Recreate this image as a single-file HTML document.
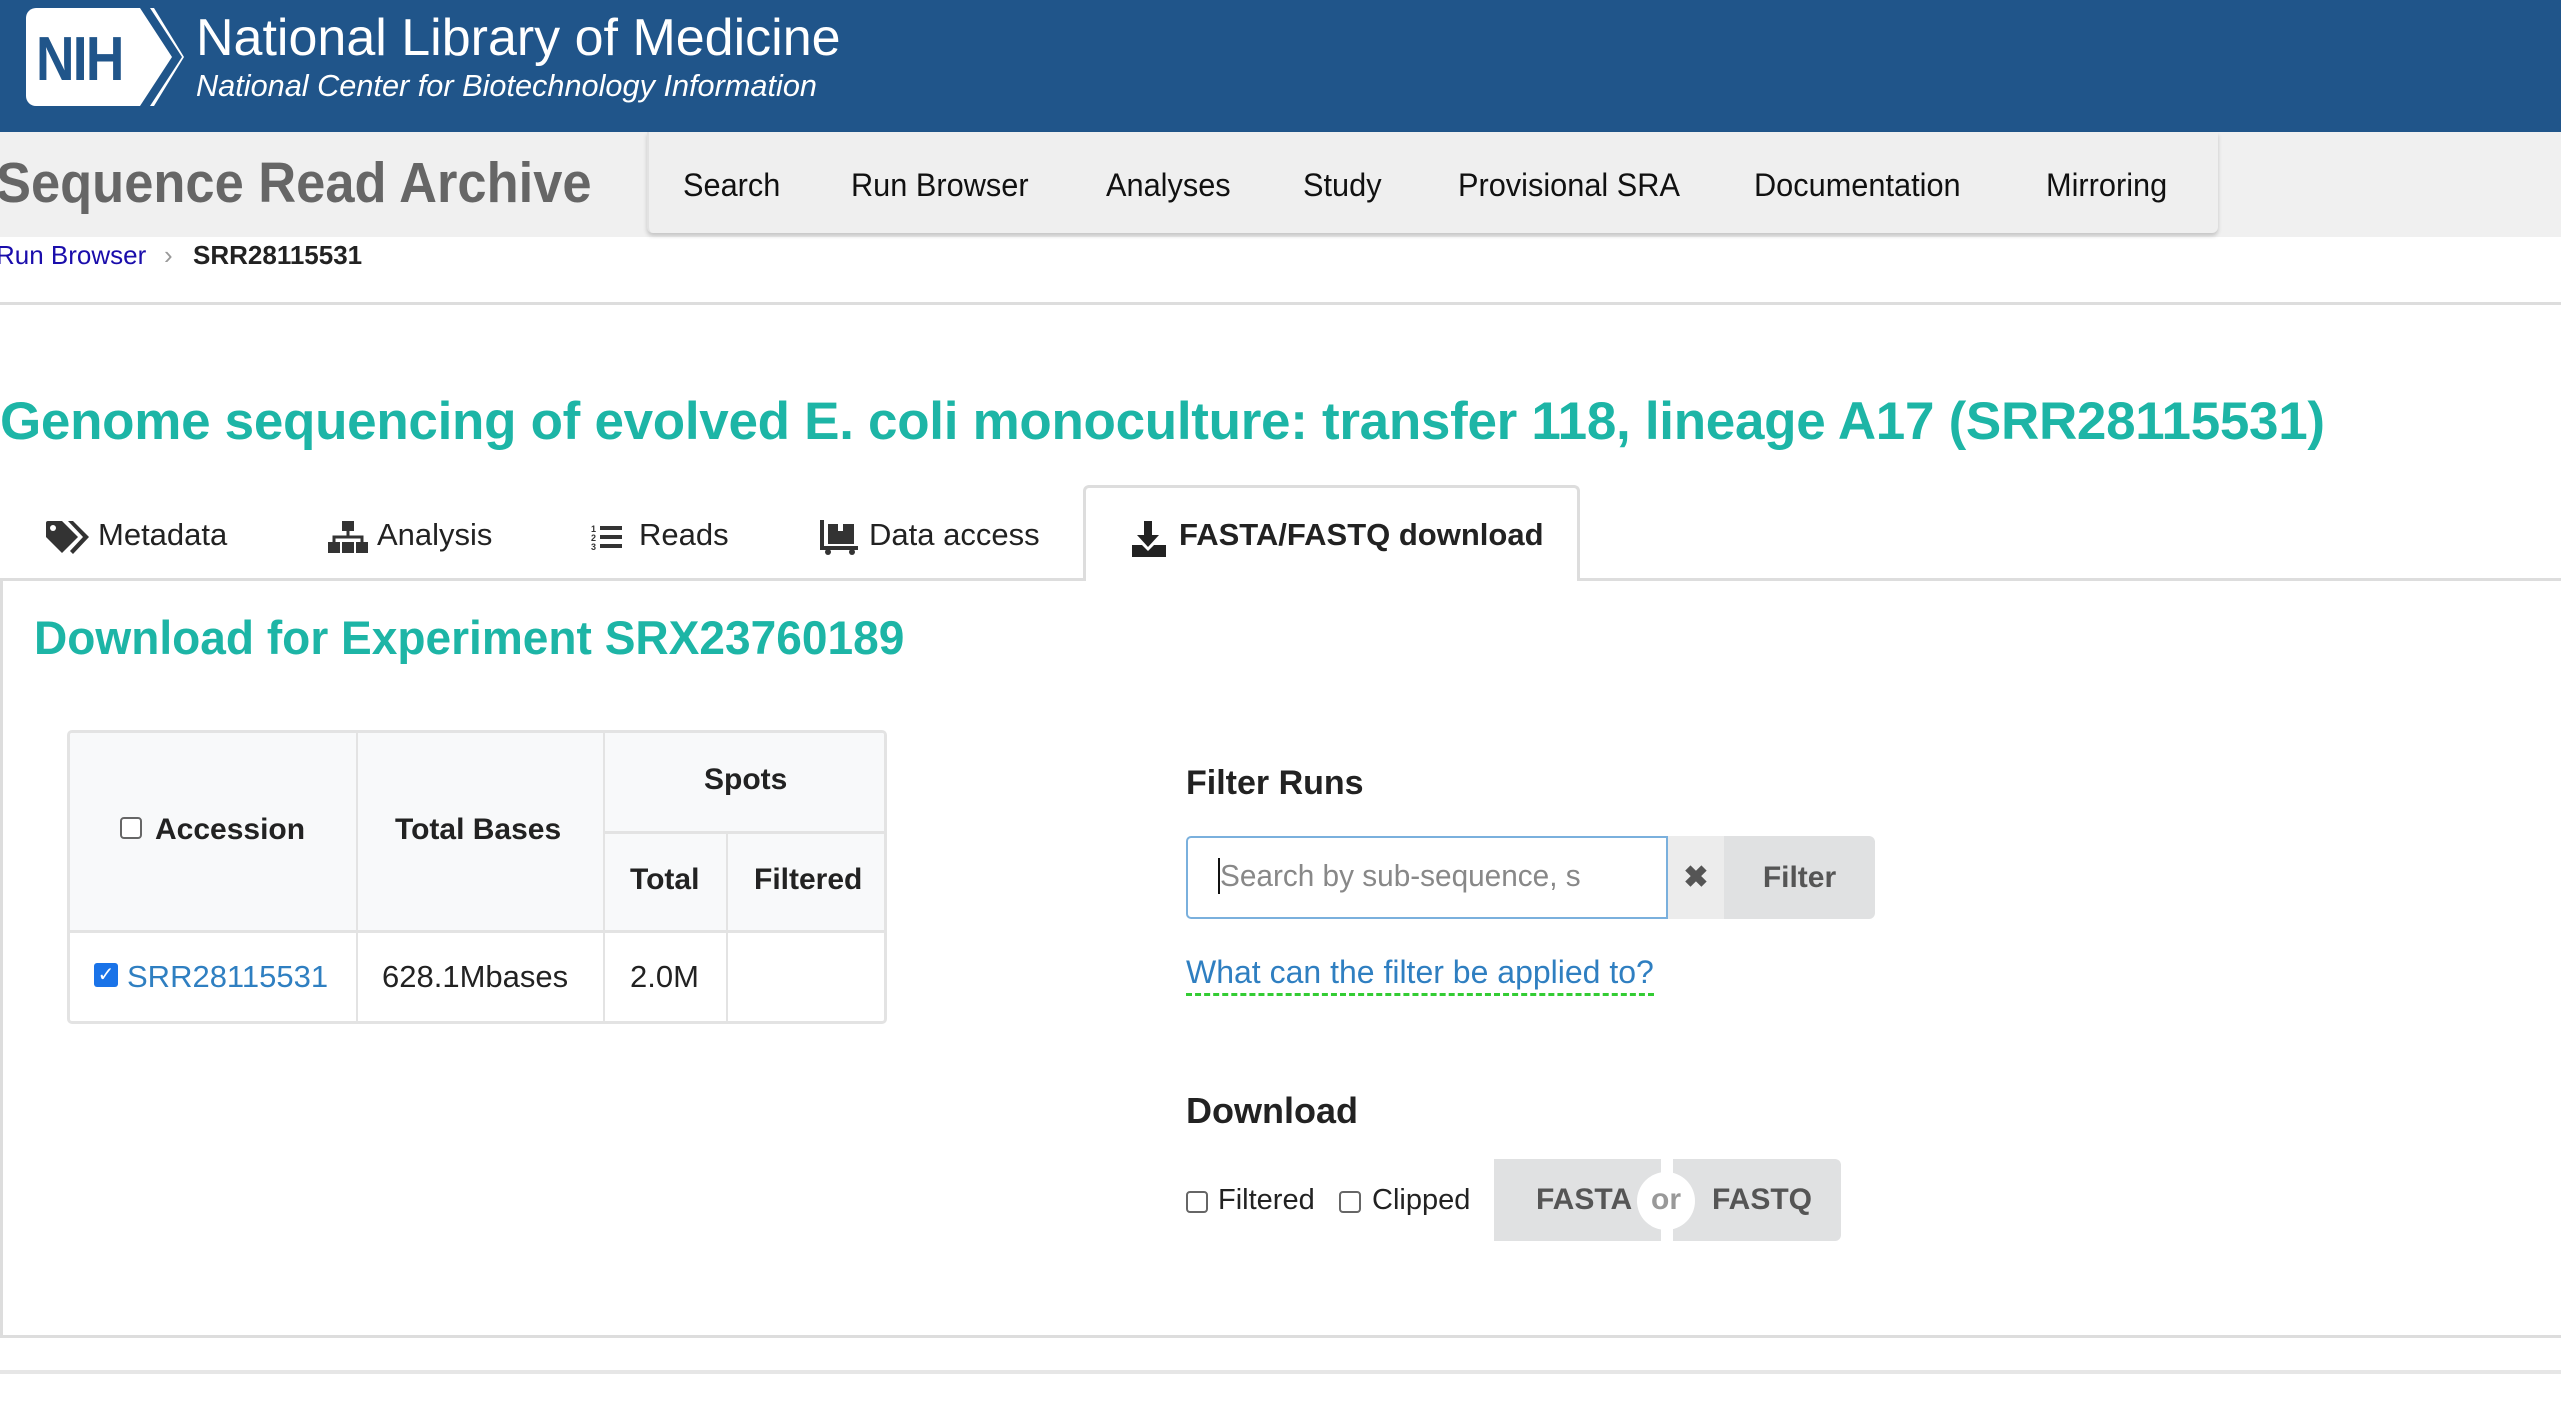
<!DOCTYPE html>
<html><head><meta charset="utf-8"><style>
*{margin:0;padding:0;box-sizing:border-box}
body{width:2561px;height:1404px;position:relative;background:#fff;font-family:"Liberation Sans",sans-serif;overflow:hidden;color:#222}
.a{position:absolute;white-space:nowrap}
.hdr{left:0;top:0;width:2561px;height:132px;background:#20558a}
.bar{left:0;top:132px;width:2561px;height:105px;background:#f0f0f0}
.nav{left:647px;top:132px;width:1571px;height:101px;background:#efefef;border-radius:0 0 6px 6px;box-shadow:0 3px 4px rgba(0,0,0,.18);border-left:2px solid #e2e2e2}
.ni{top:167px;font-size:32px;color:#111;transform:scaleX(.96);transform-origin:left}
.tab{top:517px;font-size:31px;color:#222}
.th{font-weight:bold;font-size:30px;color:#222}
.cb{width:22px;height:22px;border:2px solid #666;border-radius:4px;background:#fff}
</style></head><body>
<div class="a hdr"></div>
<div class="a" style="left:26px;top:8px;width:128px;height:98px;background:#fff;border-radius:10px 0 0 10px"></div>
<svg class="a" style="left:100px;top:8px" width="84" height="98"><polygon points="0,0 40,0 78,49 40,98 0,98" fill="#fff"/><polygon points="44,0 54,0 84,49 54,98 44,98 72,49" fill="#fff"/></svg>
<svg class="a" style="left:100px;top:8px" width="90" height="98"><polygon points="40,0 50,0 82,49 50,98 40,98 72,49" fill="#20558a"/></svg>
<div class="a" style="left:36px;top:24px;font-size:62px;font-weight:bold;color:#20558a;letter-spacing:-2px;transform:scaleX(.86);transform-origin:left">NIH</div>
<div class="a" style="left:196px;top:8px;font-size:52px;color:#fff">National Library of Medicine</div>
<div class="a" style="left:196px;top:68px;font-size:31px;color:#fff;font-style:italic;transform:scaleX(.99);transform-origin:left">National Center for Biotechnology Information</div>
<div class="a bar"></div>
<div class="a" style="left:-4px;top:150px;font-size:57px;font-weight:bold;color:#666;transform:scaleX(.92);transform-origin:left">Sequence Read Archive</div>
<div class="a nav"></div>
<div class="a ni" style="left:683px">Search</div>
<div class="a ni" style="left:851px">Run Browser</div>
<div class="a ni" style="left:1106px">Analyses</div>
<div class="a ni" style="left:1303px">Study</div>
<div class="a ni" style="left:1458px">Provisional SRA</div>
<div class="a ni" style="left:1754px">Documentation</div>
<div class="a ni" style="left:2046px">Mirroring</div>
<div class="a" style="left:-4px;top:240px;font-size:26px;color:#1a0dab">Run Browser</div>
<div class="a" style="left:164px;top:240px;font-size:26px;color:#999">›</div>
<div class="a" style="left:193px;top:240px;font-size:26px;font-weight:bold;color:#222">SRR28115531</div>
<div class="a" style="left:0;top:302px;width:2561px;height:3px;background:#ddd"></div>
<div class="a" style="left:0;top:391px;font-size:53px;font-weight:bold;color:#1db5a6;letter-spacing:-0.3px">Genome sequencing of evolved E. coli monoculture: transfer 118, lineage A17 (SRR28115531)</div>
<!-- tabs -->
<div class="a" style="left:0;top:578px;width:2561px;height:3px;background:#ddd"></div>
<div class="a" style="left:1083px;top:485px;width:497px;height:96px;background:#fff;border:3px solid #ddd;border-bottom:none;border-radius:6px 6px 0 0"></div>
<svg class="a" style="left:46px;top:521px" width="44" height="34" viewBox="0 0 44 34"><path d="M0 2 Q0 0 2 0 H16 L32 16 L16 32 L0 16Z" fill="#333"/><circle cx="7" cy="7" r="3" fill="#fff"/><path d="M22 0 H27 L43 16 L27 33 L24 30 L37 16Z" fill="#333"/></svg>
<div class="a tab" style="left:98px">Metadata</div>
<svg class="a" style="left:328px;top:521px" width="40" height="32" viewBox="0 0 40 32"><rect x="14" y="0" width="12" height="10" fill="#333"/><path d="M20 10v6M6 22v-6h28v6" stroke="#333" stroke-width="3" fill="none"/><rect x="0" y="21" width="12" height="11" fill="#333"/><rect x="14" y="21" width="12" height="11" fill="#333"/><rect x="28" y="21" width="12" height="11" fill="#333"/></svg>
<div class="a tab" style="left:377px">Analysis</div>
<svg class="a" style="left:591px;top:523px" width="34" height="28" viewBox="0 0 34 28"><text x="0" y="9" font-size="9" font-weight="bold" fill="#333" font-family="Liberation Sans">1</text><text x="0" y="18" font-size="9" font-weight="bold" fill="#333" font-family="Liberation Sans">2</text><text x="0" y="27" font-size="9" font-weight="bold" fill="#333" font-family="Liberation Sans">3</text><rect x="9" y="3" width="22" height="4" fill="#333"/><rect x="9" y="12" width="22" height="4" fill="#333"/><rect x="9" y="21" width="22" height="4" fill="#333"/></svg>
<div class="a tab" style="left:639px">Reads</div>
<svg class="a" style="left:820px;top:520px" width="40" height="36" viewBox="0 0 40 36"><path d="M2 0v28h36" stroke="#333" stroke-width="4" fill="none"/><rect x="8" y="4" width="26" height="20" fill="#333"/><rect x="18" y="4" width="5" height="7" fill="#fff"/><circle cx="8" cy="32" r="3" fill="#333"/><circle cx="32" cy="32" r="3" fill="#333"/></svg>
<div class="a tab" style="left:869px">Data access</div>
<svg class="a" style="left:1132px;top:521px" width="34" height="36" viewBox="0 0 34 36"><path d="M12 0h8v14h7L16 26 5 14h7Z" fill="#222"/><path d="M0 24h10l6 6 6-6h12v12H0Z" fill="#222"/></svg>
<div class="a tab" style="left:1179px;font-weight:bold">FASTA/FASTQ download</div>
<!-- panel -->
<div class="a" style="left:0;top:580px;width:2561px;height:758px;border-left:3px solid #ddd;border-bottom:3px solid #ddd"></div>
<div class="a" style="left:0;top:1370px;width:2561px;height:4px;background:#e6e6e6"></div>
<div class="a" style="left:34px;top:610px;font-size:47px;font-weight:bold;color:#1db5a6;transform:scaleX(.98);transform-origin:left">Download for Experiment SRX23760189</div>
<!-- table -->
<div class="a" style="left:67px;top:730px;width:820px;height:294px;border:3px solid #e3e3e3;border-radius:5px;overflow:hidden">
 <div class="a" style="left:0;top:0;width:820px;height:200px;background:#f8f9fa;border-bottom:3px solid #e3e3e3"></div>
 <div class="a" style="left:286px;top:0;width:2px;height:294px;background:#e3e3e3"></div>
 <div class="a" style="left:533px;top:0;width:2px;height:294px;background:#e3e3e3"></div>
 <div class="a" style="left:533px;top:98px;width:290px;height:3px;background:#e3e3e3"></div>
 <div class="a" style="left:656px;top:100px;width:2px;height:194px;background:#e3e3e3"></div>
 <div class="a cb" style="left:50px;top:84px"></div>
 <div class="a th" style="left:85px;top:80px">Accession</div>
 <div class="a th" style="left:325px;top:80px">Total Bases</div>
 <div class="a th" style="left:634px;top:30px">Spots</div>
 <div class="a th" style="left:560px;top:130px">Total</div>
 <div class="a th" style="left:684px;top:130px">Filtered</div>
 <div class="a" style="left:24px;top:230px;width:24px;height:24px;background:#1a73e8;border-radius:3px;color:#fff;font-size:20px;text-align:center;line-height:24px">✓</div>
 <div class="a" style="left:57px;top:226px;font-size:31px;color:#2f7fc1">SRR28115531</div>
 <div class="a" style="left:312px;top:226px;font-size:31px;color:#222">628.1Mbases</div>
 <div class="a" style="left:560px;top:226px;font-size:31px;color:#222">2.0M</div>
</div>
<!-- filter -->
<div class="a" style="left:1186px;top:764px;font-size:34px;font-weight:bold;color:#222">Filter Runs</div>
<div class="a" style="left:1186px;top:836px;width:482px;height:83px;border:2px solid #7ab0dd;border-radius:5px 0 0 5px;background:#fff"></div>
<div class="a" style="left:1218px;top:858px;width:2px;height:36px;background:#111"></div>
<div class="a" style="left:1220px;top:858px;font-size:31px;color:#888;transform:scaleX(.96);transform-origin:left">Search by sub-sequence, s</div>
<div class="a" style="left:1668px;top:836px;width:56px;height:83px;background:#ececec;color:#555;font-size:30px;text-align:center;line-height:83px;font-weight:bold">✖</div>
<div class="a" style="left:1724px;top:836px;width:151px;height:83px;background:#e0e1e2;border-radius:0 6px 6px 0;color:#555;font-size:30px;font-weight:bold;text-align:center;line-height:83px">Filter</div>
<div class="a" style="left:1186px;top:954px;font-size:32px;color:#2f7fc1;border-bottom:3px dashed #3c3;padding-bottom:2px">What can the filter be applied to?</div>
<div class="a" style="left:1186px;top:1090px;font-size:36px;font-weight:bold;color:#222">Download</div>
<div class="a cb" style="left:1186px;top:1191px"></div>
<div class="a" style="left:1218px;top:1184px;font-size:29px;color:#222">Filtered</div>
<div class="a cb" style="left:1339px;top:1191px"></div>
<div class="a" style="left:1372px;top:1184px;font-size:29px;color:#222">Clipped</div>
<div class="a" style="left:1494px;top:1159px;width:167px;height:82px;background:#e0e1e2"></div>
<div class="a" style="left:1673px;top:1159px;width:168px;height:82px;background:#e0e1e2;border-radius:0 6px 6px 0"></div>
<div class="a" style="left:1637px;top:1172px;width:58px;height:58px;border-radius:50%;background:#fff;color:#999;font-size:30px;font-weight:bold;text-align:center;line-height:56px">or</div>
<div class="a" style="left:1536px;top:1183px;font-size:30px;font-weight:bold;color:#555">FASTA</div>
<div class="a" style="left:1712px;top:1183px;font-size:30px;font-weight:bold;color:#555">FASTQ</div>
</body></html>
